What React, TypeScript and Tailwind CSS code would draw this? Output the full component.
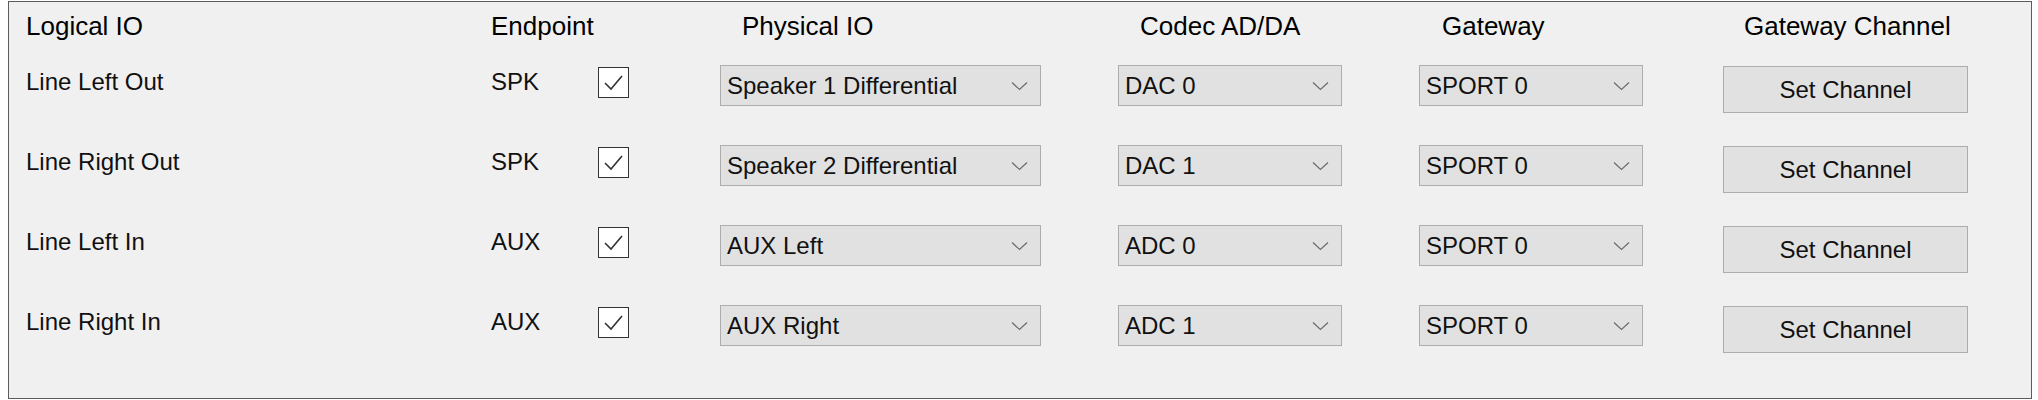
import React from 'react';

interface IoRow {
  logical: string;
  endpoint: string;
  physical: string;
  codec: string;
  gateway: string;
}

const rows: IoRow[] = [
  { logical: 'Line Left Out', endpoint: 'SPK', physical: 'Speaker 1 Differential', codec: 'DAC 0', gateway: 'SPORT 0' },
  { logical: 'Line Right Out', endpoint: 'SPK', physical: 'Speaker 2 Differential', codec: 'DAC 1', gateway: 'SPORT 0' },
  { logical: 'Line Left In', endpoint: 'AUX', physical: 'AUX Left', codec: 'ADC 0', gateway: 'SPORT 0' },
  { logical: 'Line Right In', endpoint: 'AUX', physical: 'AUX Right', codec: 'ADC 1', gateway: 'SPORT 0' },
];

function Chevron() {
  return (
    <svg width="17" height="10" viewBox="0 0 17 10" className="shrink-0">
      <polyline points="1,1.5 8.5,8.5 16,1.5" fill="none" stroke="#6b6b6b" strokeWidth="1.2" />
    </svg>
  );
}

function Combo({ value, width }: { value: string; width: string }) {
  return (
    <div
      className={`${width} flex h-[41px] items-center justify-between border border-[#adadad] bg-[#e1e1e1] pl-[6px] pr-[12px] text-[24px] leading-[30px] text-[#111]`}
    >
      <span>{value}</span>
      <Chevron />
    </div>
  );
}

function CheckBox() {
  return (
    <div className="mt-[2px] flex h-[31px] w-[31px] items-center justify-center border border-[#333] bg-white">
      <svg width="29" height="29" viewBox="0 0 29 29">
        <polyline points="6,15 12,21 23,8" fill="none" stroke="#333" strokeWidth="1.6" />
      </svg>
    </div>
  );
}

export default function App() {
  return (
    <div className="h-[400px] w-[2038px] bg-white pl-[8px] pt-[1px]" style={{ fontFamily: '"Liberation Sans", Arial, sans-serif' }}>
      <div className="h-[398px] w-[2024px] border border-[#5c5c5c] bg-[#f0f0f0]">
        {/* header */}
        <div className="flex pl-[17px] pt-[9px] text-[26px] leading-[30px] text-black">
          <div className="w-[465px]">Logical IO</div>
          <div className="w-[251px]">Endpoint</div>
          <div className="w-[398px]">Physical IO</div>
          <div className="w-[302px]">Codec AD/DA</div>
          <div className="w-[302px]">Gateway</div>
          <div>Gateway Channel</div>
        </div>

        <div className="mt-[24px] flex flex-col">
          {rows.map((r, i) => (
            <div key={i} className="flex h-[80px] items-start pl-[17px] text-[24px] leading-[30px] text-[#111]">
              <div className="mt-[2px] w-[465px]">{r.logical}</div>
              <div className="mt-[2px] w-[107px]">{r.endpoint}</div>
              <CheckBox />
              <div className="ml-[91px]">
                <Combo value={r.physical} width="w-[321px]" />
              </div>
              <div className="ml-[77px]">
                <Combo value={r.codec} width="w-[224px]" />
              </div>
              <div className="ml-[77px]">
                <Combo value={r.gateway} width="w-[224px]" />
              </div>
              <button className="ml-[80px] mt-[1px] h-[47px] w-[245px] border border-[#adadad] bg-[#e1e1e1] text-[24px] leading-[30px] text-[#111]">
                Set Channel
              </button>
            </div>
          ))}
        </div>
      </div>
    </div>
  );
}
